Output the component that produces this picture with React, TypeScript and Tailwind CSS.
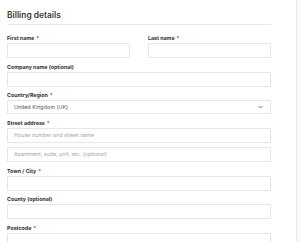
import React from 'react';

type Field = {
  label: string;
  required?: boolean;
  placeholder?: string;
  value?: string;
  select?: boolean;
  extra?: string;
};

const fields: Field[] = [
  { label: 'Company name (optional)' },
  { label: 'Country/Region', required: true, value: 'United Kingdom (UK)', select: true },
  { label: 'Street address', required: true, placeholder: 'House number and street name', extra: 'Apartment, suite, unit, etc. (optional)' },
  { label: 'Town / City', required: true },
  { label: 'County (optional)' },
  { label: 'Postcode', required: true },
];

const Label: React.FC<{ text: string; required?: boolean }> = ({ text, required }) => (
  <label className="block h-[8px] mb-px text-[5.3px] leading-[8px] font-bold text-[#333]">
    {text}
    {required && <span className="text-[#e2401c] ml-[2px]">*</span>}
  </label>
);

const Box: React.FC<{ placeholder?: string; value?: string; select?: boolean }> = ({ placeholder, value, select }) => (
  <div className={(select ? 'h-[14px]' : 'h-[15px]') + ' border border-[#e6e6e6] rounded-[1px] bg-white flex items-center pl-[6px] pr-[7px] text-[5.4px] leading-none'}>
    {value ? (
      <span className="flex-1 text-[#555]">{value}</span>
    ) : (
      <span className="flex-1 text-[#a8a8a8]">{placeholder}</span>
    )}
    {select && (
      <svg width="5" height="4" viewBox="0 0 5 4">
        <path d="M0.5 1 L2.5 3 L4.5 1" fill="none" stroke="#777" strokeWidth="1" />
      </svg>
    )}
  </div>
);

export default function App() {
  return (
    <div className="w-[300px] h-[242px] overflow-hidden flex bg-white" style={{ fontFamily: 'Inter, "Noto Sans", sans-serif' }}>
      <div className="w-[297px] border-r border-[#ececec] pl-[7px] pr-[25px]">
        <h3 className="pt-[9px] text-[8.4px] leading-[12px] font-semibold text-[#3a3a3a]">Billing details</h3>
        <div className="mt-[3px] border-t border-[#e8e8e8]" />
        <div className="mt-[9px] flex flex-col gap-[4.7px]">
          <div className="grid grid-cols-2 gap-[18px]">
            <div>
              <Label text="First name" required />
              <Box />
            </div>
            <div>
              <Label text="Last name" required />
              <Box />
            </div>
          </div>
          {fields.map((f) => (
            <div key={f.label} className="flex flex-col">
              <Label text={f.label} required={f.required} />
              <Box placeholder={f.placeholder} value={f.value} select={f.select} />
              {f.extra && (
                <div className="mt-[4px]">
                  <Box placeholder={f.extra} />
                </div>
              )}
            </div>
          ))}
        </div>
      </div>
      <div className="flex-1 bg-[#fafafa]" />
    </div>
  );
}
